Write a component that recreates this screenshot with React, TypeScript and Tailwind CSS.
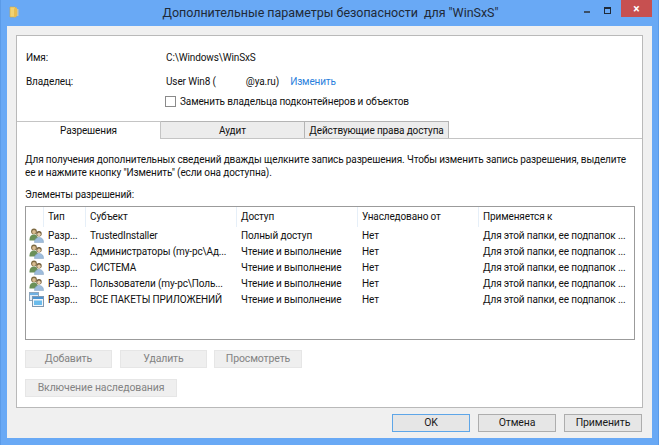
const rows = [
  { subject: "TrustedInstaller", access: "Полный доступ", icon: "users" },
  { subject: "Администраторы (my-pc\\Ад...", access: "Чтение и выполнение", icon: "users" },
  { subject: "СИСТЕМА", access: "Чтение и выполнение", icon: "users" },
  { subject: "Пользователи (my-pc\\Поль...", access: "Чтение и выполнение", icon: "users" },
  { subject: "ВСЕ ПАКЕТЫ ПРИЛОЖЕНИЙ", access: "Чтение и выполнение", icon: "apps" },
];

function FolderIcon() {
  return (
    <svg width="11" height="12" viewBox="0 0 11 12" className="shrink-0">
      <path d="M1 1h5l1 1v9H1z" fill="#f3d372" stroke="#d3a93e" strokeWidth="0.6" />
      <path d="M5 2.5l3-1v8.5l-3 1.5z" fill="#e8bd52" />
      <path d="M8 3h1.5v7H8z" fill="#c9c4a8" />
    </svg>
  );
}

function UsersIcon() {
  return (
    <svg width="15" height="15" viewBox="0 0 15 15" className="shrink-0">
      <circle cx="5" cy="3.4" r="2.9" fill="#7d6a42" />
      <circle cx="5" cy="4" r="1.9" fill="#d9bd92" />
      <path d="M0.5 11.5c0-3.2 2-5 4.5-5s4 1.8 4 5v1H0.5z" fill="#6a9058" />
      <circle cx="10" cy="5.8" r="2.7" fill="#6f5a38" />
      <circle cx="10" cy="6.4" r="1.8" fill="#e6cda8" />
      <path d="M5.5 14c0-3 2-4.6 4.5-4.6s4.5 1.6 4.5 4.6v0.6h-9z" fill="#9dbcdc" stroke="#7d9cbc" strokeWidth="0.5" />
    </svg>
  );
}

function AppsIcon() {
  return (
    <svg width="15" height="15" viewBox="0 0 15 15" className="shrink-0">
      <rect x="0.5" y="0.5" width="9" height="8" fill="#e4eef8" stroke="#8ea6bd" />
      <rect x="1" y="1" width="8" height="2" fill="#6fb0e2" />
      <rect x="3.5" y="4.5" width="11" height="10" fill="#f2f6fa" stroke="#7f98b0" />
      <rect x="4" y="5" width="10" height="2" fill="#4c94d2" />
      <rect x="5" y="8.5" width="8" height="4.5" fill="#6bbcec" />
    </svg>
  );
}

function ActionButton({ label, width }: { label: string; width: string }) {
  return (
    <button className={`h-[18px] ${width} shrink-0 whitespace-nowrap border border-[#e6e6e6] bg-[#efefef] text-[10.5px] leading-none text-[#838383]`}>
      {label}
    </button>
  );
}

function DialogButton({ label, primary }: { label: string; primary?: boolean }) {
  return (
    <button
      className={`h-[18px] w-[78px] border bg-[#e6e6e6] text-[10.5px] leading-none text-[#1a1a1a] ${
        primary ? "border-[#5ea6e8]" : "border-[#adadad]"
      }`}
    >
      {label}
    </button>
  );
}

export default function App() {
  return (
    <div className="flex h-[445px] w-[659px] flex-col overflow-hidden border-x border-[#5b9be8] bg-[#69a9f5] px-[6px] font-['Roboto',sans-serif] text-[10px] tracking-[-0.12px] text-[#111111]">
      {/* title bar */}
      <div className="flex h-[26px] shrink-0 items-start">
        <div className="ml-[2px] mt-[6px] w-[68px]">
          <FolderIcon />
        </div>
        <div className="mt-[3px] flex-1 whitespace-nowrap text-center text-[12.5px] leading-5 tracking-[-0.03px] text-[#1f2a38]">
          Дополнительные параметры безопасности&nbsp; для "WinSxS"
        </div>
        <div className="flex w-[68px] items-start justify-end">
          <div className="mr-[14px] mt-[11px] h-[2px] w-[7px] bg-[#3b4f66]" />
          <div className="mr-[10px] mt-[7px] h-[7px] w-[8px] border border-t-2 border-[#1f2a38]" />
          <div className="flex h-[17px] w-[38px] items-center justify-center bg-[#c75050] text-[12px] font-bold leading-none text-white">
            ×
          </div>
        </div>
      </div>

      {/* dialog body */}
      <div className="flex h-[412px] shrink-0 flex-col bg-[#f0f0f0] px-[9px] pt-[9px]">
        <div className="flex h-[373px] shrink-0 flex-col border border-[#b9b9b9] bg-white">
          <div className="flex h-[85px] shrink-0 flex-col pl-[9px] pt-[13px]">
            <div className="flex h-4 items-center">
              <span className="w-[140px]">Имя:</span>
              <span>C:\Windows\WinSxS</span>
            </div>
            <div className="mt-2 flex h-4 items-center">
              <span className="w-[140px]">Владелец:</span>
              <span>User Win8 (</span>
              <span className="ml-[30px]">@ya.ru)</span>
              <span className="ml-[11px] text-[#2a7fdc]">Изменить</span>
            </div>
            <div className="ml-[139px] mt-[4px] flex h-4 items-center gap-[4px]">
              <span className="size-[11px] border border-[#8a8a8a] bg-white" />
              <span>Заменить владельца подконтейнеров и объектов</span>
            </div>
          </div>

          {/* tabs */}
          <div className="flex h-[18px] shrink-0 items-start border-b border-[#c4c4c4] bg-white">
            <div className="z-10 flex h-[18px] w-[144px] items-center justify-center border-r border-t border-[#c4c4c4] bg-white">
              Разрешения
            </div>
            <div className="flex h-[17px] w-[144px] items-center justify-center border-r border-t border-[#b4b4b4] bg-[#ececec]">
              Аудит
            </div>
            <div className="flex h-[17px] w-[144px] items-center justify-center whitespace-nowrap border-r border-t border-[#b4b4b4] bg-[#ececec]">
              Действующие права доступа
            </div>
          </div>

          <div className="flex flex-1 flex-col px-2 pt-[14px]">
            <p className="whitespace-nowrap leading-[13px]">
              Для получения дополнительных сведений дважды щелкните запись разрешения. Чтобы изменить запись разрешения, выделите
              <br />
              ее и нажмите кнопку "Изменить" (если она доступна).
            </p>
            <div className="mt-[9px] leading-[14px]">Элементы разрешений:</div>

            {/* permissions list */}
            <div className="mt-[4px] h-[134px] w-[610px] shrink-0 border border-[#9b9b9b]">
              <div className="grid h-[20px] grid-cols-[18px_42px_151px_121px_121px_1fr] items-start">
                <span className="h-[20px] border-r border-[#e6eff8]" />
                <span className="h-[20px] border-r border-[#e6eff8] pl-[4px] leading-[20px]">Тип</span>
                <span className="h-[20px] border-r border-[#e6eff8] pl-[4px] leading-[20px]">Субъект</span>
                <span className="h-[20px] border-r border-[#e6eff8] pl-[4px] leading-[20px]">Доступ</span>
                <span className="h-[20px] border-r border-[#e6eff8] pl-[4px] leading-[20px]">Унаследовано от</span>
                <span className="h-[20px] pl-[4px] leading-[20px]">Применяется к</span>
              </div>
              {rows.map((row) => (
                <div key={row.subject} className="grid h-4 grid-cols-[18px_42px_151px_121px_121px_1fr] items-center whitespace-nowrap">
                  <span className="pl-[3px]">{row.icon === "users" ? <UsersIcon /> : <AppsIcon />}</span>
                  <span className="pl-[4px]">Разр...</span>
                  <span className="pl-[4px]">{row.subject}</span>
                  <span className="pl-[4px]">{row.access}</span>
                  <span className="pl-[4px]">Нет</span>
                  <span className="pl-[4px]">Для этой папки, ее подпапок ...</span>
                </div>
              ))}
            </div>

            <div className="mt-[10px] flex">
              <ActionButton label="Добавить" width="w-[87px]" />
              <div className="ml-2">
                <ActionButton label="Удалить" width="w-[87px]" />
              </div>
              <div className="ml-[7px]">
                <ActionButton label="Просмотреть" width="w-[88px]" />
              </div>
            </div>
            <div className="mt-[11px]">
              <ActionButton label="Включение наследования" width="w-[152px]" />
            </div>
          </div>
        </div>

        <div className="mt-[6px] flex justify-end gap-2 pr-[1px]">
          <DialogButton label="OK" primary />
          <DialogButton label="Отмена" />
          <DialogButton label="Применить" />
        </div>
      </div>
    </div>
  );
}
